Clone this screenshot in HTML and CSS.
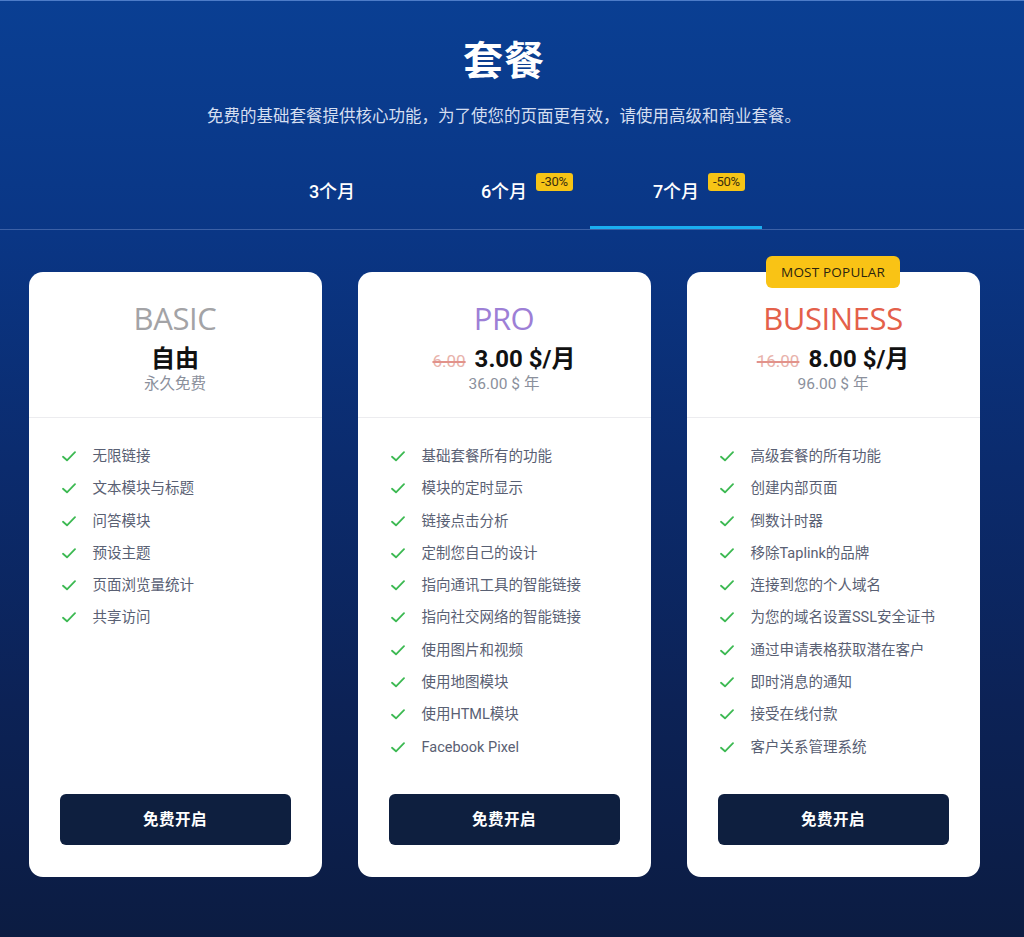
FILE: index.html
```html
<!DOCTYPE html>
<html lang="zh">
<head>
<meta charset="utf-8">
<link rel="stylesheet" href="styles.css">
</head>
<body>
<div class="hero">
  <h1 class="title">套餐</h1>
  <p class="subtitle">免费的基础套餐提供核心功能，为了使您的页面更有效，请使用高级和商业套餐。</p>
  <div class="tabbar">
    <div class="tabs">
      <div class="tab"><span class="tab-label">3个月</span></div>
      <div class="tab"><span class="tab-label">6个月<span class="discount">-30%</span></span></div>
      <div class="tab active"><span class="tab-label">7个月<span class="discount">-50%</span></span></div>
    </div>
  </div>
</div>

<div class="cards">
  <div class="card">
    <div class="card-head">
      <div class="plan basic">BASIC</div>
      <div class="price"><span class="now">自由</span></div>
      <div class="year">永久免费</div>
    </div>
    <ul class="features">
      <li><svg class="check" viewBox="0 0 14 11"><path d="M1 5.8 L5 9.3 L13 1.2"/></svg>无限链接</li>
      <li><svg class="check" viewBox="0 0 14 11"><path d="M1 5.8 L5 9.3 L13 1.2"/></svg>文本模块与标题</li>
      <li><svg class="check" viewBox="0 0 14 11"><path d="M1 5.8 L5 9.3 L13 1.2"/></svg>问答模块</li>
      <li><svg class="check" viewBox="0 0 14 11"><path d="M1 5.8 L5 9.3 L13 1.2"/></svg>预设主题</li>
      <li><svg class="check" viewBox="0 0 14 11"><path d="M1 5.8 L5 9.3 L13 1.2"/></svg>页面浏览量统计</li>
      <li><svg class="check" viewBox="0 0 14 11"><path d="M1 5.8 L5 9.3 L13 1.2"/></svg>共享访问</li>
    </ul>
    <button class="cta">免费开启</button>
  </div>

  <div class="card">
    <div class="card-head">
      <div class="plan pro">PRO</div>
      <div class="price"><span class="old">6.00</span><span class="now">3.00 $/月</span></div>
      <div class="year">36.00 $ 年</div>
    </div>
    <ul class="features">
      <li><svg class="check" viewBox="0 0 14 11"><path d="M1 5.8 L5 9.3 L13 1.2"/></svg>基础套餐所有的功能</li>
      <li><svg class="check" viewBox="0 0 14 11"><path d="M1 5.8 L5 9.3 L13 1.2"/></svg>模块的定时显示</li>
      <li><svg class="check" viewBox="0 0 14 11"><path d="M1 5.8 L5 9.3 L13 1.2"/></svg>链接点击分析</li>
      <li><svg class="check" viewBox="0 0 14 11"><path d="M1 5.8 L5 9.3 L13 1.2"/></svg>定制您自己的设计</li>
      <li><svg class="check" viewBox="0 0 14 11"><path d="M1 5.8 L5 9.3 L13 1.2"/></svg>指向通讯工具的智能链接</li>
      <li><svg class="check" viewBox="0 0 14 11"><path d="M1 5.8 L5 9.3 L13 1.2"/></svg>指向社交网络的智能链接</li>
      <li><svg class="check" viewBox="0 0 14 11"><path d="M1 5.8 L5 9.3 L13 1.2"/></svg>使用图片和视频</li>
      <li><svg class="check" viewBox="0 0 14 11"><path d="M1 5.8 L5 9.3 L13 1.2"/></svg>使用地图模块</li>
      <li><svg class="check" viewBox="0 0 14 11"><path d="M1 5.8 L5 9.3 L13 1.2"/></svg>使用HTML模块</li>
      <li><svg class="check" viewBox="0 0 14 11"><path d="M1 5.8 L5 9.3 L13 1.2"/></svg>Facebook Pixel</li>
    </ul>
    <button class="cta">免费开启</button>
  </div>

  <div class="card">
    <div class="popular">MOST POPULAR</div>
    <div class="card-head">
      <div class="plan business">BUSINESS</div>
      <div class="price"><span class="old">16.00</span><span class="now">8.00 $/月</span></div>
      <div class="year">96.00 $ 年</div>
    </div>
    <ul class="features">
      <li><svg class="check" viewBox="0 0 14 11"><path d="M1 5.8 L5 9.3 L13 1.2"/></svg>高级套餐的所有功能</li>
      <li><svg class="check" viewBox="0 0 14 11"><path d="M1 5.8 L5 9.3 L13 1.2"/></svg>创建内部页面</li>
      <li><svg class="check" viewBox="0 0 14 11"><path d="M1 5.8 L5 9.3 L13 1.2"/></svg>倒数计时器</li>
      <li><svg class="check" viewBox="0 0 14 11"><path d="M1 5.8 L5 9.3 L13 1.2"/></svg>移除Taplink的品牌</li>
      <li><svg class="check" viewBox="0 0 14 11"><path d="M1 5.8 L5 9.3 L13 1.2"/></svg>连接到您的个人域名</li>
      <li><svg class="check" viewBox="0 0 14 11"><path d="M1 5.8 L5 9.3 L13 1.2"/></svg>为您的域名设置SSL安全证书</li>
      <li><svg class="check" viewBox="0 0 14 11"><path d="M1 5.8 L5 9.3 L13 1.2"/></svg>通过申请表格获取潜在客户</li>
      <li><svg class="check" viewBox="0 0 14 11"><path d="M1 5.8 L5 9.3 L13 1.2"/></svg>即时消息的通知</li>
      <li><svg class="check" viewBox="0 0 14 11"><path d="M1 5.8 L5 9.3 L13 1.2"/></svg>接受在线付款</li>
      <li><svg class="check" viewBox="0 0 14 11"><path d="M1 5.8 L5 9.3 L13 1.2"/></svg>客户关系管理系统</li>
    </ul>
    <button class="cta">免费开启</button>
  </div>
</div>
</body>
</html>
```

FILE: styles.css
```css
* { box-sizing: border-box; }

html, body {
  margin: 0;
  padding: 0;
}

body {
  width: 1024px;
  height: 937px;
  overflow: hidden;
  font-family: Roboto, "Noto Sans CJK SC", sans-serif;
  background: linear-gradient(to bottom, #0a3f93 0%, #0a3685 25%, #0b2b6d 50%, #0c2256 75%, #0c1c42 100%);
  border-top: 1px solid #4d7cc8;
}

.hero {
  padding-top: 34px;
}

.title {
  width: 1008px;
  margin: 0;
  text-align: center;
  color: #fff;
  font-size: 40px;
  line-height: 54px;
  font-weight: 700;
  letter-spacing: 1px;
}

.subtitle {
  width: 1008px;
  margin: 16px 0 0;
  text-align: center;
  color: #d5def0;
  font-size: 16.5px;
  line-height: 24px;
}

.tabbar {
  margin-top: 21px;
  border-bottom: 1px solid #3c60a6;
}

.tabs {
  width: 1008px;
  display: flex;
  justify-content: center;
}

.tab {
  width: 172px;
  height: 79px;
  display: flex;
  align-items: center;
  justify-content: center;
  position: relative;
  color: #fff;
  font-size: 18px;
  font-weight: 500;
}

.tab.active::after {
  content: "";
  position: absolute;
  left: 0;
  right: 0;
  bottom: 0;
  height: 3px;
  background: #1aaef0;
}

.tab-label {
  position: relative;
}

.discount {
  position: absolute;
  left: calc(100% + 9px);
  top: -4px;
  padding: 0 5px;
  height: 18px;
  line-height: 18px;
  border-radius: 3px;
  background: #f6c416;
  color: #3a2f10;
  font-size: 13px;
  font-weight: 400;
  letter-spacing: -0.3px;
  white-space: nowrap;
}

.cards {
  width: 1008px;
  margin-top: 42px;
  display: flex;
  justify-content: center;
  gap: 36px;
}

.card {
  position: relative;
  width: 293px;
  height: 605px;
  background: #fff;
  border-radius: 14px;
  display: flex;
  flex-direction: column;
}

.popular {
  position: absolute;
  top: -16px;
  left: 50%;
  transform: translateX(-50%);
  width: 134px;
  height: 32px;
  line-height: 32px;
  text-align: center;
  background: #f9c315;
  border-radius: 6px;
  color: #2a2410;
  font-family: "Open Sans", sans-serif;
  font-size: 13.5px;
  font-weight: 500;
  letter-spacing: 0.2px;
}

.card-head {
  padding: 28px 0 23px;
  text-align: center;
  border-bottom: 1px solid #ececef;
}

.plan {
  font-family: "Open Sans", sans-serif;
  font-size: 31px;
  line-height: 36px;
  font-weight: 400;
  letter-spacing: -0.4px;
}

.plan.basic { color: #a3a3a6; }
.plan.pro { color: #9d7fd6; }
.plan.business { color: #e4604a; }

.price {
  margin-top: 8px;
  height: 30px;
  display: flex;
  justify-content: center;
  align-items: center;
  gap: 9px;
}

.price .now {
  font-size: 24px;
  line-height: 30px;
  font-weight: 700;
  color: #111;
}

.price .old {
  font-size: 17px;
  line-height: 30px;
  padding-top: 3px;
  color: #e8b2ab;
  text-decoration: line-through;
  text-decoration-color: #e2928a;
  text-decoration-thickness: 1.5px;
}

.year {
  font-size: 15.5px;
  line-height: 20px;
  color: #8b909c;
}

.features {
  list-style: none;
  margin: 0;
  padding: 23px 0 0 33px;
}

.features li {
  height: 32.3px;
  line-height: 32.3px;
  font-size: 14.5px;
  color: #596073;
  white-space: nowrap;
}

.check {
  display: inline-block;
  vertical-align: -1px;
  width: 14px;
  height: 11px;
  margin-right: 17px;
  fill: none;
  stroke: #3cb952;
  stroke-width: 1.8;
  stroke-linecap: round;
  stroke-linejoin: round;
}

.cta {
  margin: auto 31px 32px;
  height: 51px;
  padding: 0 0 3px;
  border: none;
  border-radius: 6px;
  background: #0e1f3f;
  color: #fff;
  font-family: Roboto, "Noto Sans CJK SC", sans-serif;
  font-size: 15.5px;
  font-weight: 700;
  letter-spacing: 0.5px;
}
```
